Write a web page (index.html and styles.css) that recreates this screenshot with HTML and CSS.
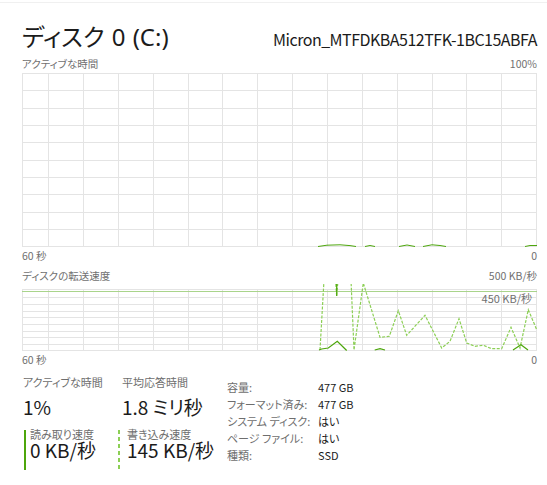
FILE: index.html
```html
<!DOCTYPE html>
<html lang="ja">
<head>
  <meta charset="UTF-8">
  <title>ディスク 0 (C:)</title>
  <link rel="stylesheet" href="styles.css">
</head>
<body>

<div class="panel">
  <div class="head">
    <span class="title">ディスク 0 (C:)</span>
    <span class="model">Micron_MTFDKBA512TFK-1BC15ABFA</span>
  </div>

  <div class="axis axis-top"><span>アクティブな時間</span><span>100%</span></div>
  <svg class="chart chart-active" width="515" height="174" viewBox="0 0 515 174">
    <rect class="grid" x="0.5" y="0.5" width="514" height="173"/>
    <path class="grid" d="M26.5 0V174M61.5 0V174M96.5 0V174M131.5 0V174M166.5 0V174M200.5 0V174M235.5 0V174M270.5 0V174M305.5 0V174M340.5 0V174M375.5 0V174M410.5 0V174M444.5 0V174M479.5 0V174
      M0 17.5H515M0 35.5H515M0 52.5H515M0 69.5H515M0 87.5H515M0 104.5H515M0 121.5H515M0 139.5H515M0 156.5H515"/>
    <path class="line-read thin" d="M296 173.5L305 172.2L318 171.8L328 172.6L334 173.5M343 173.5L348 172.5L353 173.5M377 173.5L385 172L393 173.5M401 173.5L410 171.8L418 172.5L424 173.5M503 173.5L508 172.5L515 172.5"/>
  </svg>
  <div class="axis"><span>60 秒</span><span>0</span></div>

  <div class="axis axis-gap"><span>ディスクの転送速度</span><span>500 KB/秒</span></div>
  <div class="chart-wrap">
    <svg class="chart chart-rate" width="515" height="67" viewBox="0 0 515 67">
      <rect class="grid" x="0.5" y="5.5" width="514" height="61"/>
      <path class="grid" d="M26.5 5V67M61.5 5V67M96.5 5V67M131.5 5V67M166.5 5V67M200.5 5V67M235.5 5V67M270.5 5V67M305.5 5V67M340.5 5V67M375.5 5V67M410.5 5V67M444.5 5V67M479.5 5V67
        M0 13.5H515M0 20.5H515M0 27.5H515M0 33.5H515M0 40.5H515M0 47.5H515M0 53.5H515M0 60.5H515"/>
      <path class="scale-line" d="M0 7.5H515"/>
      <path class="line-write" d="M298 66L302 -4L313.5 -4L314.7 12.3L316 -4L329 -4L332 66L341.3 -1L358 53.3L367.3 52.3L376.3 26.7L384.7 51.3L403 31.3L419.7 64L428 57.3L437 34.7L444.7 59L453 62.3L461.3 61.3L469.7 64.7L479.7 64.7L489 43.3L498 64L506.3 25.7L514.7 45.7"/>
      <path class="line-read" d="M297 66L299.7 65L306.3 64L315.3 57.3L324.7 66.5M352.7 66L358 64.7L363 66M491 66L499 60.7L506 66M314.7 0V12"/>
    </svg>
    <span class="scale-tag">450 KB/秒</span>
  </div>
  <div class="axis"><span>60 秒</span><span>0</span></div>

  <div class="stats">
    <div class="stat-grid">
      <div class="stat">
        <div class="stat-label">アクティブな時間</div>
        <div class="stat-value">1%</div>
      </div>
      <div class="stat">
        <div class="stat-label">平均応答時間</div>
        <div class="stat-value">1.8 ミリ秒</div>
      </div>
      <div class="stat stat-read">
        <div class="stat-label">読み取り速度</div>
        <div class="stat-value">0 KB/秒</div>
      </div>
      <div class="stat stat-write">
        <div class="stat-label">書き込み速度</div>
        <div class="stat-value">145 KB/秒</div>
      </div>
    </div>
    <dl class="props">
      <dt>容量:</dt><dd>477 GB</dd>
      <dt>フォーマット済み:</dt><dd>477 GB</dd>
      <dt>システム ディスク:</dt><dd>はい</dd>
      <dt>ページ ファイル:</dt><dd>はい</dd>
      <dt>種類:</dt><dd>SSD</dd>
    </dl>
  </div>
</div>

</body>
</html>
```

FILE: styles.css
```css
body {
  margin: 0;
  font-family: "Noto Sans CJK JP", "Noto Sans", sans-serif;
  font-feature-settings: "palt";
  background: #fff;
  color: #1b1b1b;
  border-top: 1px solid #f0f0f0;
  margin-top: 2px;
}

.panel {
  width: 515px;
  padding: 13px 10px 0 22px;
}

.head {
  display: flex;
  justify-content: space-between;
  align-items: baseline;
  height: 40px;
  line-height: 41px;
}

.title {
  font-family: "Noto Sans", "Noto Sans CJK JP", sans-serif;
  font-size: 24px;
  word-spacing: 1px;
}

.model {
  font-size: 16px;
  letter-spacing: -0.5px;
}

.axis {
  display: flex;
  justify-content: space-between;
  font-size: 10.5px;
  line-height: 14px;
  color: #707070;
  margin-top: 2px;
}

.axis-top {
  margin-top: 1px;
  margin-bottom: 2px;
}

.axis-gap {
  margin-top: 6px;
  margin-bottom: 1px;
}

.chart {
  display: block;
}

.grid {
  fill: none;
  stroke: #e4e4e4;
  stroke-width: 1;
}

.scale-line {
  stroke: #a9d48b;
  stroke-width: 1;
}

.line-read {
  fill: none;
  stroke: #4da60c;
  stroke-width: 1.2;
}

.line-read.thin {
  stroke-width: 1;
}

.line-write {
  fill: none;
  stroke: #8ccf55;
  stroke-width: 1.2;
  stroke-dasharray: 3 1.5;
}

.chart-wrap {
  position: relative;
}

.scale-tag {
  position: absolute;
  right: 5px;
  top: 7px;
  font-size: 11px;
  line-height: 14px;
  color: #707070;
}

.stats {
  display: flex;
  align-items: flex-start;
  margin-top: 8px;
}

.stat-grid {
  width: 204px;
  padding-left: 1px;
  display: grid;
  grid-template-columns: 99px 1fr;
  row-gap: 7px;
}

.stat-label {
  font-size: 11px;
  line-height: 14px;
  color: #6e6e6e;
}

.stat-value {
  font-size: 19px;
  line-height: 26px;
  margin-top: 5px;
}

.stat-read .stat-value,
.stat-write .stat-value {
  line-height: 16px;
  margin-top: 1px;
}

.stat-read,
.stat-write {
  padding-bottom: 12px;
}

.stat-read {
  margin-left: 1px;
  padding-left: 6px;
  background: linear-gradient(#4da60c, #4da60c) left 3px / 2px calc(100% - 3px) no-repeat;
}

.stat-write {
  margin-left: -4px;
  padding-left: 9px;
  background: repeating-linear-gradient(to bottom, #8ccf55 0 4px, transparent 4px 7px) left 3px / 2px calc(100% - 3px) no-repeat;
}

.props {
  margin: 4px 0 0;
  display: grid;
  grid-template-columns: 91px auto;
  align-content: start;
  font-size: 11px;
  line-height: 17px;
}

.props dt {
  color: #6e6e6e;
}

.props dd {
  margin: 0;
  color: #1b1b1b;
}
```
